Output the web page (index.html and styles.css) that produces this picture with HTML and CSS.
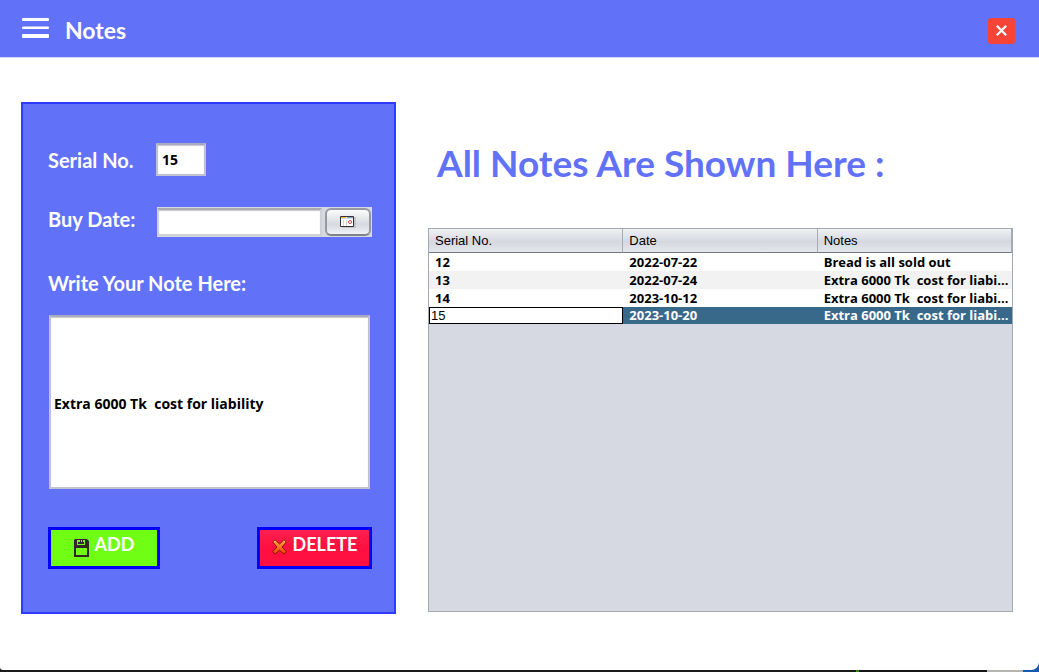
FILE: index.html
```html
<!DOCTYPE html>
<html lang="en">
<head>
<meta charset="utf-8">
<meta name="viewport" content="width=device-width, initial-scale=1">
<title>Notes</title>
<link rel="stylesheet" href="styles.css">
</head>
<body>
<div class="window">
  <header class="topbar">
    <button class="menu-button" type="button" aria-label="Menu">
      <svg width="27" height="20" viewBox="0 0 27 20" fill="#fff"><rect width="27" height="3" rx="1"/><rect y="8.500" width="27" height="2.500" rx="1"/><rect y="16" width="27" height="4" rx="1"/></svg>
    </button>
    <h1 class="title">Notes</h1>
    <button class="close-button" type="button" aria-label="Close">
      <svg width="11" height="11" viewBox="0 0 11 11" fill="none" stroke="#fff" stroke-width="2.200"><path d="M.8.8l9.4 9.4M10.200.8L.8 10.200"/></svg>
    </button>
  </header>
  <main class="content">
    <form class="panel">
      <div class="field-row">
        <label class="label" for="serial">Serial No.</label>
        <input class="text-input serial-input" id="serial" type="text" value="15">
      </div>
      <div class="field-row date-row">
        <label class="label" for="date">Buy Date:</label>
        <div class="date-chooser">
          <input class="date-input" id="date" type="text">
          <button class="date-button" type="button" aria-label="Choose date">
            <svg width="16" height="12" viewBox="0 0 16 12"><path fill="#c5c5c8" d="M2 1h14v11H2z"/><path fill="#fff" stroke="#333" d="M.5.5h13v10H.5z"/><path fill="#f0b83c" d="M1 1h5v1H1z"/><path fill="#7fa8e0" d="M7 1h6v1H7z"/><path fill="#d5d5d5" d="M1 2h12v1H1zM3 4h1v6H3zM6 4h1v6H6z"/><circle cx="10" cy="6" r="1.500" fill="#fff" stroke="#e04848"/></svg>
          </button>
        </div>
      </div>
      <label class="label note-label" for="note">Write Your Note Here:</label>
      <input class="text-input note-input" id="note" type="text" value="Extra 6000 Tk  cost for liability">
      <div class="actions">
        <button class="action add" type="button">
          <svg class="action-icon" width="15" height="18" viewBox="0 0 15 18"><path fill="#33262a" fill-rule="evenodd" d="M1 0h12l2 2v16H0V1zM2 9v7h11V9zM3 1v5h8V1H9v2H6V1z"/><path fill="#33262a" d="M4 3h6v2H4z"/><path fill="#70ff14" d="M7 1h1v2H7z"/></svg>
          <span>ADD</span>
        </button>
        <button class="action delete" type="button">
          <svg class="action-icon" width="15" height="16" viewBox="0 0 15 16"><defs><linearGradient id="cross" x2="0" y2="1"><stop stop-color="#ffad48"/><stop offset="1" stop-color="#f03c00"/></linearGradient></defs><path fill="url(#cross)" stroke="#8c1500" d="M3 .8L7.500 5 12 .8 14.300 3 10 8l4.300 4.500-2.300 2.700-4.500-4-4.500 4L.7 12.500 5 8 .7 3z"/><path fill="none" stroke="#ffd9a0" d="M2 3l1.200-1M11.800 2L13 3"/></svg>
          <span>DELETE</span>
        </button>
      </div>
    </form>
    <section class="list">
      <h2 class="heading">All Notes Are Shown Here :</h2>
      <div class="table-frame">
        <table class="notes">
          <thead>
            <tr><th scope="col">Serial No.</th><th scope="col">Date</th><th scope="col">Notes</th></tr>
          </thead>
          <tbody>
            <tr><td>12</td><td>2022-07-22</td><td>Bread is all sold out</td></tr>
            <tr><td>13</td><td>2022-07-24</td><td>Extra 6000 Tk  cost for liabi...</td></tr>
            <tr><td>14</td><td>2023-10-12</td><td>Extra 6000 Tk  cost for liabi...</td></tr>
            <tr class="selected"><td class="editing"><input class="cell-input" type="text" value="15" aria-label="Serial No."></td><td>2023-10-20</td><td>Extra 6000 Tk  cost for liabi...</td></tr>
          </tbody>
        </table>
      </div>
    </section>
  </main>
</div>
</body>
</html>
```
FILE: styles.css
```css
* {
  box-sizing: border-box;
}

body {
  margin: 0;
  min-height: 100vh;
  display: flex;
  flex-direction: column;
  padding-bottom: 2px;
  background: linear-gradient(to right, #1b1b1d 0 82.4%, #3c8a14 82.4% 82.7%, #141414 82.7% 95%, #b4b4b0 95% 98.5%, #1558b0 98.5%);
  font-family: "Open Sans", "Noto Sans", sans-serif;
  color: #000;
}

button,
input {
  font: inherit;
  margin: 0;
}

.window {
  flex: 1;
  display: flex;
  flex-direction: column;
  background: #fff;
  border-radius: 0 0 8px 3px;
}

.topbar {
  display: flex;
  align-items: center;
  height: 58px;
  padding: 0 24px 0 22px;
  background: #6272f8;
  border-bottom: 1px solid #d4d8f8;
}

.menu-button {
  display: flex;
  margin-bottom: 1px;
  padding: 0;
  border: 0;
  background: none;
}

.title {
  margin: 2px 0 0 16px;
  color: #fff;
  font: bold 23px/28px Lato, sans-serif;
}

.close-button {
  display: flex;
  align-items: center;
  justify-content: center;
  width: 27px;
  height: 26px;
  margin: 4px 0 0 auto;
  padding: 0;
  border: 0;
  border-radius: 3px;
  background: #f64438;
}

.content {
  flex: 1;
  display: grid;
  grid-template-columns: 375px minmax(0, 1fr);
  gap: 32px;
  padding: 44px 26px 56px 21px;
}

.panel {
  display: flex;
  flex-direction: column;
  padding: 39px 23px 43px 25px;
  border: 2px solid #2f3bff;
  background: #6272f8;
}

.label {
  color: #fff;
  font: bold 20px/24px Lato, sans-serif;
}

.field-row {
  display: grid;
  grid-template-columns: 108px minmax(0, 1fr);
  align-items: center;
}

.date-row {
  margin-top: 31px;
  align-items: start;
}

.text-input {
  border: 2px solid #c0c2d0;
  border-top-color: #a9abc0;
  border-radius: 0;
  padding: 0 4px;
  background: #fff;
  box-shadow: inset 0 1px 1px #c8c8cc;
  font-size: 14px;
  font-weight: bold;
}

.serial-input {
  width: 50px;
  height: 33px;
}

.date-chooser {
  display: flex;
  gap: 3px;
  height: 30px;
  margin: 0 -1px 0 1px;
  padding: 1px 1px 1px 0;
  background: #d6d9df;
}

.date-input {
  flex: 1;
  min-width: 0;
  border: 2px solid #d0d1d6;
  border-top-color: #a9abb0;
  background: #fff;
  box-shadow: inset 0 1px 1px #c8c8cc;
}

.date-button {
  display: flex;
  align-items: center;
  justify-content: center;
  width: 46px;
  padding: 0;
  border: 2px solid #9699a0;
  border-bottom-color: #808389;
  border-radius: 6px;
  background: linear-gradient(#fbfbfc, #d6d9df 60%, #f0f2f6);
}

.note-label {
  margin-top: 34px;
}

.note-input {
  height: 174px;
  margin: 20px 1px 0 1px;
  padding: 2px 3px 0;
}

.actions {
  display: flex;
  justify-content: space-between;
  margin: 38px -1px 0 0;
}

.action {
  display: flex;
  justify-content: center;
  gap: 6px;
  height: 42px;
  padding: 2px 0 0;
  border: 3px solid #0000fa;
  color: #fff;
  font: bold 18px/24px Lato, sans-serif;
}

.action-icon {
  margin-top: 7px;
}

.add {
  width: 112px;
  background: #70ff14;
}

.delete {
  width: 115px;
  background: linear-gradient(#ff2050, #ff1040 50%);
}

.list {
  display: flex;
  flex-direction: column;
}

.heading {
  margin: 39px 0 0 9px;
  color: #6272f8;
  font: bold 37px/44px Lato, sans-serif;
}

.table-frame {
  flex: 1;
  margin: 43px 0 2px;
  border: 1px solid #a4a8b4;
  background: #d6d9e1;
}

.notes {
  width: 100%;
  table-layout: fixed;
  border-collapse: separate;
  border-spacing: 0;
}

.notes th {
  height: 24px;
  padding: 0 6px;
  border-right: 1px solid #a9acb5;
  border-bottom: 1px solid #747883;
  background: linear-gradient(#eff1f4, #d5d8df 55%, #e3e6ed);
  text-align: left;
  font: 13px/20px "Liberation Sans", Arial, sans-serif;
}

.notes td {
  height: 18px;
  padding: 0 6px;
  background: #fff;
  font-size: 13px;
  font-weight: bold;
  line-height: 18px;
  white-space: pre;
  overflow: hidden;
}

.notes tr:nth-child(even) td {
  background: #f2f2f2;
}

.notes tr.selected td {
  height: 17px;
  background: #39698a;
  color: #fff;
  line-height: 17px;
}

.notes tr.selected .editing {
  padding: 0;
}

.cell-input {
  display: block;
  width: 100%;
  height: 17px;
  padding: 0 1px;
  border: 1px solid #000;
  background: #fff;
  font: 13px/15px "Liberation Sans", Arial, sans-serif;
}
```
